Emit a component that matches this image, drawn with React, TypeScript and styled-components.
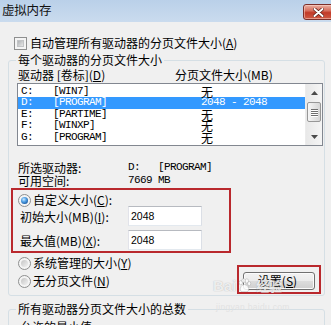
import React from "react";
import styled, { createGlobalStyle } from "styled-components";

const Global = createGlobalStyle`
  html, body { margin: 0; padding: 0; }
  body {
    background: #f0f0f0;
    width: 331px;
    height: 325px;
    overflow: hidden;
    font-family: "Noto Sans CJK SC", "Microsoft YaHei", sans-serif;
    font-size: 12px;
    color: #000;
  }
  #root { width: 331px; height: 325px; overflow: hidden; }
  u { text-decoration-thickness: 1px; text-underline-offset: 1px; }
`;

const Window = styled.div`
  position: relative;
  width: 331px;
  height: 325px;
  overflow: hidden;
  background: #f0f0f0;
  display: flex;
  flex-direction: column;
`;

const TitleBar = styled.div`
  height: 22px;
  flex: none;
  background: linear-gradient(to bottom, #bad0e9, #cadbee);
  display: flex;
  align-items: flex-start;
  padding-left: 2px;
  overflow: hidden;
`;

const Title = styled.span`
  font-size: 12.5px;
  line-height: 20px;
  letter-spacing: -0.2px;
  color: #111;
`;

const CloseBtn = styled.div`
  margin-left: auto;
  margin-top: 4px;
  margin-right: -15px;
  width: 43px;
  height: 16px;
  box-sizing: border-box;
  border: 1px solid #7c2f2a;
  border-radius: 3px;
  background: linear-gradient(#eab0a3 0%, #d7705f 40%, #c23a28 55%, #cf5a45 100%);
  box-shadow: inset 0 0 0 1px rgba(255, 220, 210, 0.5);
  display: flex;
  align-items: center;
  padding-left: 9px;
`;

const Body = styled.div`
  flex: 1;
  display: flex;
  flex-direction: column;
  padding: 0 6px 0 8px;
`;

const CheckRow = styled.label`
  margin-top: 14px;
  height: 14px;
  display: flex;
  align-items: center;
  gap: 3px;
  padding-left: 6px;
  line-height: 14px;
  white-space: nowrap;
`;

const CheckBox = styled.span`
  position: relative;
  width: 13px;
  height: 13px;
  flex: none;
  box-sizing: border-box;
  border: 1px solid #8e8f8f;
  background: #f4f4f4;
  &::after {
    content: "";
    position: absolute;
    inset: 2px;
    background: linear-gradient(135deg, #b0b3b6, #e6e6e6);
    border: 1px solid #c2c4c6;
    box-sizing: border-box;
  }
`;

const Group = styled.fieldset<{ $top: number; $pb: number }>`
  margin: ${(p) => p.$top}px 0 0 0;
  padding: 0 0 ${(p) => p.$pb}px 0;
  border: 1px solid #d5dfe5;
  border-radius: 3px;
  min-width: 0;
  display: flex;
  flex-direction: column;
`;

const Legend = styled.legend`
  margin-left: 7px;
  padding: 0 2px;
  font-size: 12px;
  line-height: 14px;
  white-space: nowrap;
`;

const HeaderRow = styled.div`
  margin-top: 1px;
  height: 14px;
  line-height: 14px;
  padding-left: 9px;
  display: grid;
  grid-template-columns: 157px auto;
  white-space: nowrap;
`;

const ListBox = styled.div`
  margin: 1px 0 0 8px;
  width: 306px;
  height: 63px;
  box-sizing: border-box;
  border: 1px solid #828790;
  background: #fff;
  display: flex;
`;

const Rows = styled.div`
  flex: 1;
  padding-top: 1.5px;
  overflow: hidden;
`;

const Row = styled.div<{ $sel?: boolean }>`
  height: 11.5px;
  line-height: 11.5px;
  display: grid;
  grid-template-columns: 32px 148px auto;
  padding-left: 3px;
  background: ${(p) => (p.$sel ? "#3399ff" : "transparent")};
  color: ${(p) => (p.$sel ? "#fff" : "#000")};
  white-space: nowrap;
  overflow: visible;
`;

const Mono = styled.span`
  font-family: "Liberation Mono", "DejaVu Sans Mono", monospace;
  font-size: 11px;
  letter-spacing: -0.6px;
`;

const Cjk = styled.span`
  font-size: 12px;
`;

const ScrollBar = styled.div`
  width: 17px;
  flex: none;
  display: flex;
  flex-direction: column;
  background: linear-gradient(to right, #e8e8e8, #f5f5f5);
  border-left: 1px solid #ececec;
  box-sizing: border-box;
`;

const ArrowBtn = styled.div`
  height: 17px;
  flex: none;
  display: flex;
  align-items: center;
  justify-content: center;
`;

const Track = styled.div`
  flex: 1;
  display: flex;
  flex-direction: column;
  padding: 1px 1px;
`;

const Thumb = styled.div`
  height: 20px;
  box-sizing: border-box;
  border: 1px solid #979797;
  border-radius: 2px;
  background: linear-gradient(to right, #f6f6f6, #e2e2e2 60%, #d6d6d6);
  display: flex;
  flex-direction: column;
  align-items: center;
  justify-content: center;
  gap: 1px;
`;

const Grip = styled.span`
  width: 7px;
  height: 1px;
  background: #6f6f6f;
  box-shadow: 0 1px 0 #fff;
`;

const Info = styled.div`
  margin-top: 15px;
  padding-left: 9px;
  display: grid;
  grid-template-columns: 110px auto;
  line-height: 13px;
  white-space: nowrap;
`;

const RedBox = styled.div<{ $w: number; $h: number }>`
  box-sizing: border-box;
  width: ${(p) => p.$w}px;
  height: ${(p) => p.$h}px;
  border: 2px solid #b9282d;
  display: flex;
  flex-direction: column;
`;

const CustomBox = styled(RedBox)`
  margin: 1px 0 0 2px;
`;

const RadioRow = styled.label<{ $h: number }>`
  height: ${(p) => p.$h}px;
  line-height: ${(p) => p.$h}px;
  display: flex;
  align-items: center;
  gap: 2px;
  white-space: nowrap;
`;

const Radio = styled.span<{ $on?: boolean }>`
  position: relative;
  width: 13px;
  height: 13px;
  flex: none;
  box-sizing: border-box;
  border-radius: 50%;
  border: 1px solid #8e8f8f;
  background: #f4f4f4;
  &::after {
    content: "";
    position: absolute;
    inset: 2px;
    border-radius: 50%;
    background: ${(p) =>
      p.$on
        ? "radial-gradient(circle at 40% 35%, #cfeaff 0%, #5aa7e8 35%, #1b5fa8 75%, #0d3f7c 100%)"
        : "linear-gradient(135deg, #c4c4c4, #f2f2f2)"};
  }
`;

const CustomRadio = styled(RadioRow)`
  margin-top: 4px;
  padding-left: 5px;
`;

const InputRow = styled.div<{ $mt: number }>`
  margin-top: ${(p) => p.$mt}px;
  height: 20px;
  padding-left: 7px;
  display: flex;
  align-items: center;
  white-space: nowrap;
`;

const InputLabel = styled.span`
  width: 108px;
  flex: none;
`;

const TextBox = styled.div`
  width: 74px;
  height: 20px;
  box-sizing: border-box;
  border: 1px solid;
  border-color: #b7bac0 #dbdfe6 #e3e9ef #e2e3ea;
  background: #fff;
  padding: 3px 0 0 2px;
  font-family: "Liberation Sans", Arial, sans-serif;
  font-size: 10.5px;
  line-height: 12px;
`;

const BottomRow = styled.div`
  margin-top: 3px;
  display: flex;
  align-items: flex-start;
`;

const RadioCol = styled.div`
  padding-left: 9px;
  display: flex;
  flex-direction: column;
  gap: 4px;
`;

const ButtonFrame = styled(RedBox)`
  margin: 9px 3px 0 auto;
  padding: 5px 0 0 4px;
`;

const Button = styled.div`
  width: 72px;
  height: 18px;
  box-sizing: border-box;
  border: 1px solid #707070;
  border-radius: 3px;
  background: linear-gradient(#f2f2f2 0%, #ebebeb 50%, #dddddd 51%, #cfcfcf 100%);
  box-shadow: inset 0 0 0 1px #fbfbfb;
  display: flex;
  align-items: center;
  justify-content: center;
  line-height: 16px;
  padding-right: 3px;
`;

const TotalRow = styled.div`
  margin-top: 4px;
  padding-left: 11px;
  line-height: 14px;
  white-space: nowrap;
`;

const Watermark = styled.div`
  position: absolute;
  left: 213px;
  top: 277px;
  display: flex;
  flex-direction: column;
  align-items: flex-start;
  pointer-events: none;
`;

const WmMain = styled.div`
  display: flex;
  align-items: center;
  gap: 1px;
  font-family: "Liberation Sans", Arial, sans-serif;
  font-weight: bold;
  font-size: 15px;
  line-height: 17px;
  color: rgba(255, 255, 255, 0.8);
  text-shadow: 0 0 1px rgba(110, 110, 110, 0.55);
`;

const WmCjk = styled.span`
  font-family: "Noto Sans CJK SC", sans-serif;
  font-size: 13px;
  margin-left: 3px;
`;

const WmSub = styled.div`
  margin-top: 8px;
  margin-left: 3px;
  font-family: "Liberation Sans", Arial, sans-serif;
  font-size: 8.5px;
  color: rgba(225, 225, 225, 0.95);
  letter-spacing: 0.3px;
`;

const drives = [
  { d: "C:", label: "[WIN7]", size: "无", sel: false },
  { d: "D:", label: "[PROGRAM]", size: "2048 - 2048", sel: true },
  { d: "E:", label: "[PARTIME]", size: "无", sel: false },
  { d: "F:", label: "[WINXP]", size: "无", sel: false },
  { d: "G:", label: "[PROGRAM]", size: "无", sel: false },
];

const Arrow = ({ up }: { up?: boolean }) => (
  <svg width="7" height="4" viewBox="0 0 7 4">
    <path d={up ? "M0 4 L3.5 0 L7 4 Z" : "M0 0 L3.5 4 L7 0 Z"} fill="#4a4a4a" />
  </svg>
);

const Paw = () => (
  <svg width="15" height="15" viewBox="0 0 16 16">
    <g fill="rgba(255,255,255,0.85)" stroke="rgba(120,120,120,0.5)" strokeWidth="0.6">
      <ellipse cx="4" cy="5" rx="1.8" ry="2.3" />
      <ellipse cx="7" cy="2.8" rx="1.8" ry="2.3" />
      <ellipse cx="10.5" cy="3.2" rx="1.8" ry="2.3" />
      <ellipse cx="13" cy="6" rx="1.7" ry="2.2" />
      <path d="M8 7 C4.5 7 3 11 3.5 13 C4 15 7 14.5 8 14.5 C9 14.5 12 15 12.5 13 C13 11 11.5 7 8 7 Z" />
    </g>
  </svg>
);

export default function App() {
  return (
    <Window>
      <Global />
      <TitleBar>
        <Title>虚拟内存</Title>
        <CloseBtn>
          <svg width="11" height="9" viewBox="0 0 11 9">
            <path
              d="M1.5 1 L9.5 8 M9.5 1 L1.5 8"
              stroke="#5a1a14"
              strokeWidth="3.4"
              strokeLinecap="round"
            />
            <path
              d="M1.5 1 L9.5 8 M9.5 1 L1.5 8"
              stroke="#ffffff"
              strokeWidth="2"
              strokeLinecap="round"
            />
          </svg>
        </CloseBtn>
      </TitleBar>
      <Body>
        <CheckRow>
          <CheckBox />
          <span>
            自动管理所有驱动器的分页文件大小(<u>A</u>)
          </span>
        </CheckRow>

        <Group $top={3} $pb={1}>
          <Legend>每个驱动器的分页文件大小</Legend>
          <HeaderRow>
            <span>
              驱动器 [卷标](<u>D</u>)
            </span>
            <span>分页文件大小(MB)</span>
          </HeaderRow>
          <ListBox>
            <Rows>
              {drives.map((r) => (
                <Row key={r.d} $sel={r.sel}>
                  <Mono>{r.d}</Mono>
                  <Mono>{r.label}</Mono>
                  {r.size === "无" ? <Cjk>{r.size}</Cjk> : <Mono>{r.size}</Mono>}
                </Row>
              ))}
            </Rows>
            <ScrollBar>
              <ArrowBtn>
                <Arrow up />
              </ArrowBtn>
              <Track>
                <Thumb>
                  <Grip />
                  <Grip />
                  <Grip />
                  <Grip />
                </Thumb>
              </Track>
              <ArrowBtn>
                <Arrow />
              </ArrowBtn>
            </ScrollBar>
          </ListBox>

          <Info>
            <span>所选驱动器:</span>
            <Mono>D:&nbsp;&nbsp;&nbsp;[PROGRAM]</Mono>
            <span>可用空间:</span>
            <Mono>7669 MB</Mono>
          </Info>

          <CustomBox $w={220} $h={65}>
            <CustomRadio $h={12}>
              <Radio $on />
              <span>
                自定义大小(<u>C</u>):
              </span>
            </CustomRadio>
            <InputRow $mt={0}>
              <InputLabel>
                初始大小(MB)(<u>I</u>):
              </InputLabel>
              <TextBox>2048</TextBox>
            </InputRow>
            <InputRow $mt={4}>
              <InputLabel>
                最大值(MB)(<u>X</u>):
              </InputLabel>
              <TextBox>2048</TextBox>
            </InputRow>
          </CustomBox>

          <BottomRow>
            <RadioCol>
              <RadioRow $h={14}>
                <Radio />
                <span>
                  系统管理的大小(<u>Y</u>)
                </span>
              </RadioRow>
              <RadioRow $h={14}>
                <Radio />
                <span>
                  无分页文件(<u>N</u>)
                </span>
              </RadioRow>
            </RadioCol>
            <ButtonFrame $w={84} $h={29}>
              <Button>
                设置(<u>S</u>)
              </Button>
            </ButtonFrame>
          </BottomRow>
        </Group>

        <Group $top={6} $pb={0}>
          <Legend>所有驱动器分页文件大小的总数</Legend>
          <TotalRow>允许的最小值:</TotalRow>
        </Group>
      </Body>

      <Watermark>
        <WmMain>
          <span>Bai</span>
          <Paw />
          <WmCjk>经验</WmCjk>
        </WmMain>
        <WmSub>jingyan.baidu.com</WmSub>
      </Watermark>
    </Window>
  );
}
